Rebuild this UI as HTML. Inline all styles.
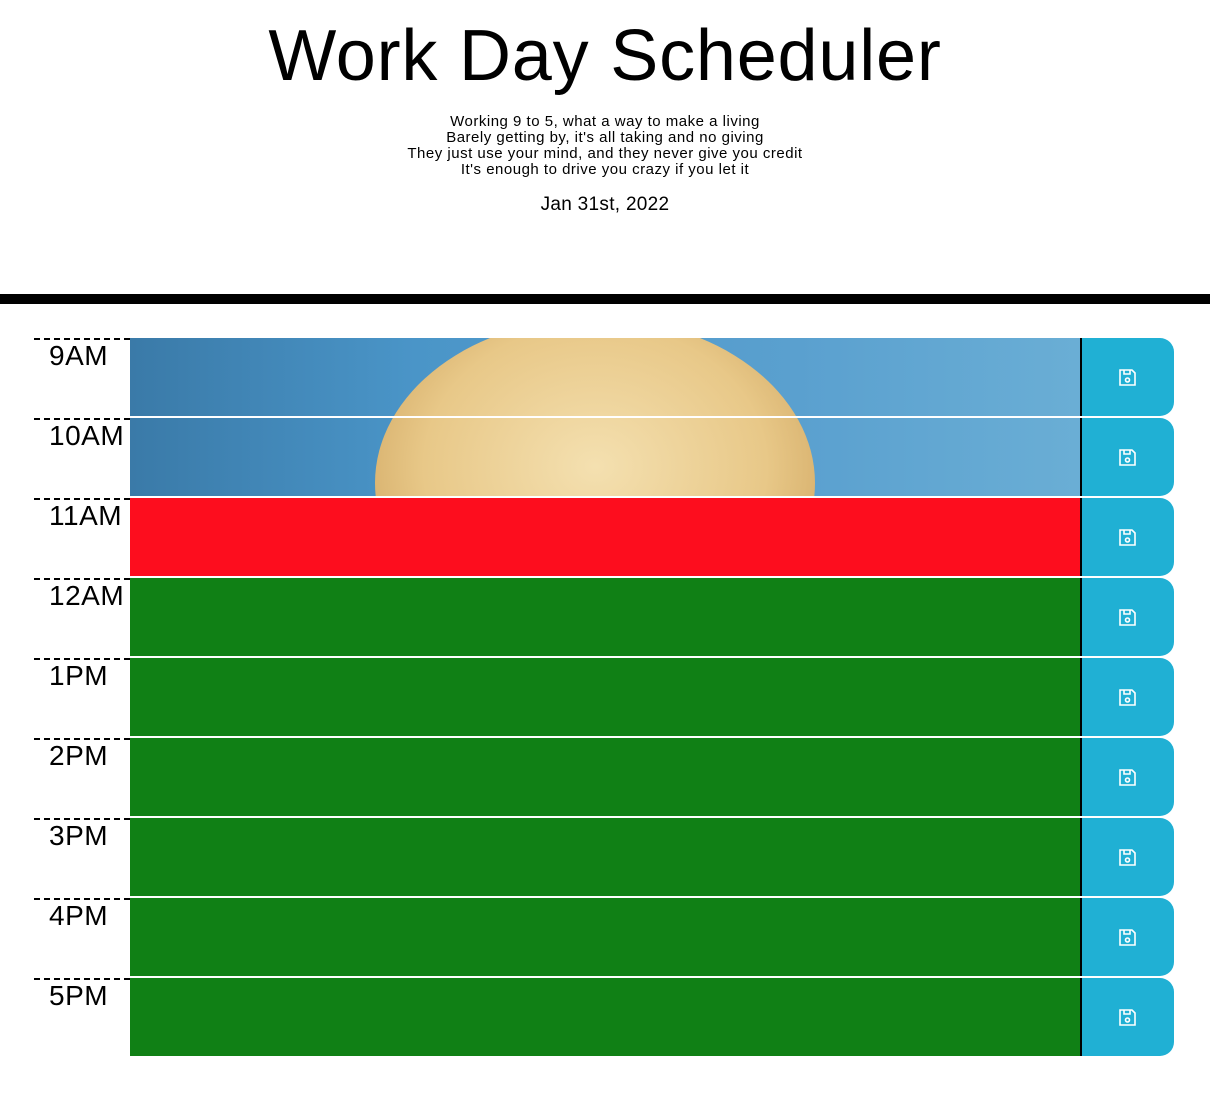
<!DOCTYPE html>
<html><head><style>
body{margin:0;width:1210px;height:1096px;background:#fff;font-family:"Liberation Sans",sans-serif;position:relative;overflow:hidden}
h1{position:absolute;top:14px;left:0;width:1210px;text-align:center;margin:0;font-weight:normal;font-size:72px;line-height:84px;letter-spacing:0.8px}
.lyr{position:absolute;top:114px;left:0;width:1210px;text-align:center;font-size:15px;line-height:16px;letter-spacing:0.5px}
.date{position:absolute;top:194px;left:0;width:1210px;text-align:center;font-size:19px;letter-spacing:0.3px}
.bar{position:absolute;top:294px;left:0;width:1210px;height:10px;background:#000}
.row{position:absolute;left:34px;height:78px;width:1140px}
.hr{position:absolute;left:0;top:0;width:96px;height:78px;border-top:2px dashed #000;box-sizing:border-box;font-size:28px;padding-left:15px;line-height:32px;letter-spacing:0.5px;white-space:nowrap}
.ta{position:absolute;left:96px;top:0;width:950px;height:78px;border-right:2px solid #000}
.btn{position:absolute;left:1048px;top:0;width:92px;height:78px;background:#20b0d4;border-radius:0 14px 14px 0}
.btn svg{position:absolute;left:36px;top:30px}
.g{background:#108015}.r{background:#fd0d1e}
.img{position:absolute;left:130px;top:338px;width:950px;height:158px;background:linear-gradient(90deg,#3a7aa8,#4a95c8 30%,#5aa0cf 70%,#6aaed5);overflow:hidden}
.hair{position:absolute;left:245px;top:0;width:440px;height:330px;border-radius:50%;background:radial-gradient(ellipse at 50% 45%,#f4e0b0,#e8c888 55%,#d4ac68 80%,#c09050)}
.gap{position:absolute;left:130px;top:416px;width:950px;height:2px;background:#fff}
</style></head><body>
<h1>Work Day Scheduler</h1>
<div class="lyr">Working 9 to 5, what a way to make a living<br>Barely getting by, it's all taking and no giving<br>They just use your mind, and they never give you credit<br>It's enough to drive you crazy if you let it</div>
<div class="date">Jan 31st, 2022</div>
<div class="bar"></div>
<div class="img"><div class="hair" style="top:-20px"></div></div>
<div class="gap"></div>
<div id="rows"></div>
<script>
var h=["9AM","10AM","11AM","12AM","1PM","2PM","3PM","4PM","5PM"],s="";
for(var i=0;i<9;i++){var c=i<2?"":(i==2?"r":"g");
s+='<div class="row" style="top:'+(338+80*i)+'px"><div class="hr">'+h[i]+'</div>'+(i<2?'<div class="ta" style="background:transparent"></div>':'<div class="ta '+c+'"></div>')+'<div class="btn"><svg width="19" height="19" viewBox="0 0 19 19" fill="none" stroke="#fff" stroke-width="1.6"><path d="M2 2h12l3 3v12H2z"/><path d="M6 2v4h6V2"/><circle cx="9.5" cy="12" r="2"/></svg></div></div>';}
document.getElementById("rows").innerHTML=s;
</script>
</body></html>
